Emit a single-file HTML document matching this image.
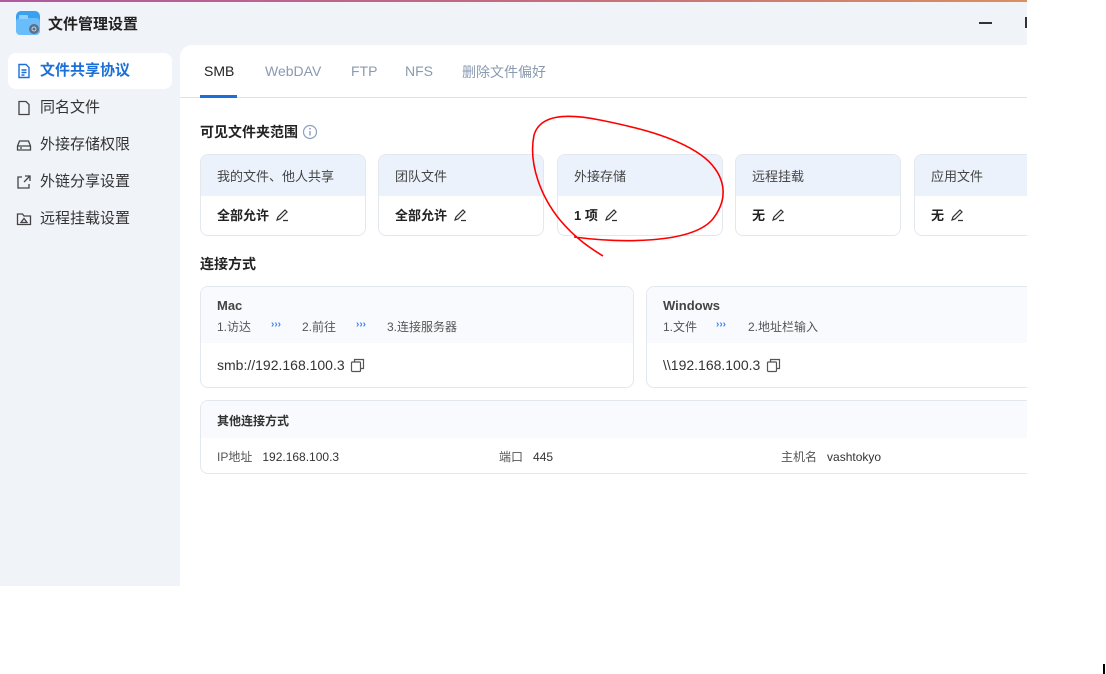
<!DOCTYPE html>
<html><head><meta charset="utf-8"><style>
*{box-sizing:border-box;margin:0;padding:0}
body{width:1106px;height:674px;background:#fff;position:relative;overflow:hidden;font-family:"Liberation Sans","Noto Sans CJK SC",sans-serif;color:#222}
#win{position:absolute;left:0;top:0;width:1027px;height:586px;background:#f0f3f8;overflow:hidden}
.topline{position:absolute;left:0;top:0;width:1027px;height:2px;background:linear-gradient(90deg,#b05aa0,#c46a80,#d89060)}
.a{position:absolute;white-space:nowrap}
#main{position:absolute;left:180px;top:45px;width:900px;height:600px;background:#fff;border-top-left-radius:12px}
.nav{position:absolute;left:8px;width:164px;height:36px;font-size:15px;color:#333;padding-left:32px;line-height:36px}
.nav svg{position:absolute;left:8px;top:10px}
.card{position:absolute;top:154px;width:166px;height:82px;border:1px solid #e3e8ef;border-radius:8px;overflow:hidden;background:#fff}
.card .h{height:41px;background:#ecf2fb;font-size:13px;color:#444;padding:11px 0 0 16px}
.card .b{font-size:13px;font-weight:bold;padding:9px 0 0 16px;color:#222}
.card .b svg{vertical-align:-3px;margin-left:6px}
.box{position:absolute;border:1px solid #e3e8ef;border-radius:8px;overflow:hidden;background:#fff}
.box .h{background:#f8fafd}
.s{font-size:12px;color:#555}
.arr{color:#3b82f6;font-size:10px;font-weight:bold}
</style></head><body>
<div id="win">
<div class="topline"></div>
<svg class="a" style="left:16px;top:11px" width="24" height="24" viewBox="0 0 24 24"><rect x="0" y="0" width="24" height="24" rx="5" fill="#3aa0f0"/><rect x="0" y="7" width="24" height="17" rx="4" fill="#69bdfa"/><rect x="3" y="4" width="9" height="4" rx="1" fill="#8fd0ff"/><circle cx="18" cy="18" r="5" fill="#5a7088"/><circle cx="18" cy="18" r="2" fill="none" stroke="#c8d4e0" stroke-width="1"/></svg>
<div class="a" style="left:48px;top:13px;font-size:15px;font-weight:bold;color:#222">文件管理设置</div>
<div class="a" style="left:979px;top:22px;width:13px;height:1.5px;background:#333"></div>
<div class="a" style="left:1025px;top:17px;width:3px;height:11px;background:#333"></div>

<div class="nav" style="top:53px;background:#fff;border-radius:8px;color:#1a6fd8;font-weight:bold"><svg width="16" height="16" viewBox="0 0 16 16" fill="none" stroke="#1a6fd8" stroke-width="1.4"><path d="M3 1.5h7l3 3v10H3z"/><path d="M5.5 7h5M5.5 9.5h5M5.5 12h3"/></svg>文件共享协议</div>
<div class="nav" style="top:90px"><svg width="16" height="16" viewBox="0 0 16 16" fill="none" stroke="#444" stroke-width="1.3"><path d="M3 1.5h7l3 3v10H3z"/></svg>同名文件</div>
<div class="nav" style="top:127px"><svg width="16" height="16" viewBox="0 0 16 16" fill="none" stroke="#444" stroke-width="1.3"><path d="M1.5 9l2-5h9l2 5v4h-13z M1.5 9h13"/><path d="M4 11h2"/></svg>外接存储权限</div>
<div class="nav" style="top:164px"><svg width="16" height="16" viewBox="0 0 16 16" fill="none" stroke="#444" stroke-width="1.3"><path d="M6 3H2v11h11v-4"/><path d="M9 2h5v5M14 2L8 8"/></svg>外链分享设置</div>
<div class="nav" style="top:201px"><svg width="16" height="16" viewBox="0 0 16 16" fill="none" stroke="#444" stroke-width="1.3"><path d="M1.5 3h5l1.5 2h6.5v8.5h-13z"/><path d="M5 11.5h6l-3-4z"/></svg>远程挂载设置</div>

<div id="main">
<div class="a" style="left:0;top:52px;width:900px;height:1px;background:#dde2ea"></div>
<div class="a" style="left:20px;top:50px;width:37px;height:3px;background:#1a6fd8"></div>
<div class="a" style="left:24px;top:18px;font-size:14px;color:#222">SMB</div>
<div class="a" style="left:85px;top:18px;font-size:14px;color:#8a9ab0">WebDAV</div>
<div class="a" style="left:171px;top:18px;font-size:14px;color:#8a9ab0">FTP</div>
<div class="a" style="left:225px;top:18px;font-size:14px;color:#8a9ab0">NFS</div>
<div class="a" style="left:282px;top:17px;font-size:14px;color:#8a9ab0">删除文件偏好</div>
<div class="a" style="left:20px;top:77px;font-size:14px;font-weight:bold;color:#222">可见文件夹范围</div>
<svg class="a" style="left:122px;top:79px" width="16" height="16" viewBox="0 0 16 16"><circle cx="8" cy="8" r="6.5" fill="none" stroke="#8aa0bc" stroke-width="1.2"/><path d="M8 7v4.5" stroke="#8aa0bc" stroke-width="1.4"/><circle cx="8" cy="4.8" r=".9" fill="#8aa0bc"/></svg>
<div class="a" style="left:20px;top:209px;font-size:14px;font-weight:bold;color:#222">连接方式</div>
</div>

<div class="card" style="left:200px"><div class="h">我的文件、他人共享</div><div class="b">全部允许<svg width="15" height="15" viewBox="0 0 15 15" fill="none" stroke="#333" stroke-width="1.2"><path d="M2 12l1-3 7-7 2 2-7 7z M8 12.5h5"/></svg></div></div>
<div class="card" style="left:378px"><div class="h">团队文件</div><div class="b">全部允许<svg width="15" height="15" viewBox="0 0 15 15" fill="none" stroke="#333" stroke-width="1.2"><path d="M2 12l1-3 7-7 2 2-7 7z M8 12.5h5"/></svg></div></div>
<div class="card" style="left:557px"><div class="h">外接存储</div><div class="b">1 项<svg width="15" height="15" viewBox="0 0 15 15" fill="none" stroke="#333" stroke-width="1.2"><path d="M2 12l1-3 7-7 2 2-7 7z M8 12.5h5"/></svg></div></div>
<div class="card" style="left:735px"><div class="h">远程挂载</div><div class="b">无<svg width="15" height="15" viewBox="0 0 15 15" fill="none" stroke="#333" stroke-width="1.2"><path d="M2 12l1-3 7-7 2 2-7 7z M8 12.5h5"/></svg></div></div>
<div class="card" style="left:914px;width:130px"><div class="h">应用文件</div><div class="b">无<svg width="15" height="15" viewBox="0 0 15 15" fill="none" stroke="#333" stroke-width="1.2"><path d="M2 12l1-3 7-7 2 2-7 7z M8 12.5h5"/></svg></div></div>

<div class="box" style="left:200px;top:286px;width:434px;height:102px"><div class="h" style="height:56px"></div></div>
<div class="a" style="left:217px;top:298px;font-size:13px;color:#444;font-weight:bold">Mac</div>
<div class="a s" style="left:217px;top:318px">1.访达</div><div class="a arr" style="left:271px;top:319px">›››</div>
<div class="a s" style="left:302px;top:318px">2.前往</div><div class="a arr" style="left:356px;top:319px">›››</div>
<div class="a s" style="left:387px;top:318px">3.连接服务器</div>
<div class="a" style="left:217px;top:357px;font-size:14px;color:#333">smb://192.168.100.3</div>
<svg class="a" style="left:350px;top:358px" width="15" height="15" viewBox="0 0 15 15" fill="none" stroke="#555" stroke-width="1.2"><rect x="1.5" y="4" width="9" height="9.5" rx="1"/><path d="M4.5 4V1.5h9v9H10.5"/></svg>

<div class="box" style="left:646px;top:286px;width:420px;height:102px"><div class="h" style="height:56px"></div></div>
<div class="a" style="left:663px;top:298px;font-size:13px;color:#444;font-weight:bold">Windows</div>
<div class="a s" style="left:663px;top:318px">1.文件</div><div class="a arr" style="left:716px;top:319px">›››</div>
<div class="a s" style="left:748px;top:318px">2.地址栏输入</div>
<div class="a" style="left:663px;top:357px;font-size:14px;color:#333">\\192.168.100.3</div>
<svg class="a" style="left:766px;top:358px" width="15" height="15" viewBox="0 0 15 15" fill="none" stroke="#555" stroke-width="1.2"><rect x="1.5" y="4" width="9" height="9.5" rx="1"/><path d="M4.5 4V1.5h9v9H10.5"/></svg>

<div class="box" style="left:200px;top:400px;width:860px;height:74px"><div class="h" style="height:37px"></div></div>
<div class="a" style="left:217px;top:412px;font-size:12px;font-weight:bold;color:#333">其他连接方式</div>
<div class="a s" style="left:217px;top:448px">IP地址 &nbsp; <span style="color:#333">192.168.100.3</span></div>
<div class="a s" style="left:499px;top:448px">端口 &nbsp; <span style="color:#333">445</span></div>
<div class="a s" style="left:781px;top:448px">主机名 &nbsp; <span style="color:#333">vashtokyo</span></div>
</div>

<svg class="a" style="left:0;top:0" width="1106" height="674" viewBox="0 0 1106 674" fill="none"><path d="M574 237 C620 243 690 244 712 220 C730 198 725 175 705 158 C680 138 640 128 600 120 C565 113 540 115 534 135 C528 165 542 198 560 220 C575 238 590 248 603 256" stroke="#f00" stroke-width="1.6"/></svg>
<div class="a" style="left:1103px;top:664px;width:2px;height:10px;background:#000"></div>
</body></html>
